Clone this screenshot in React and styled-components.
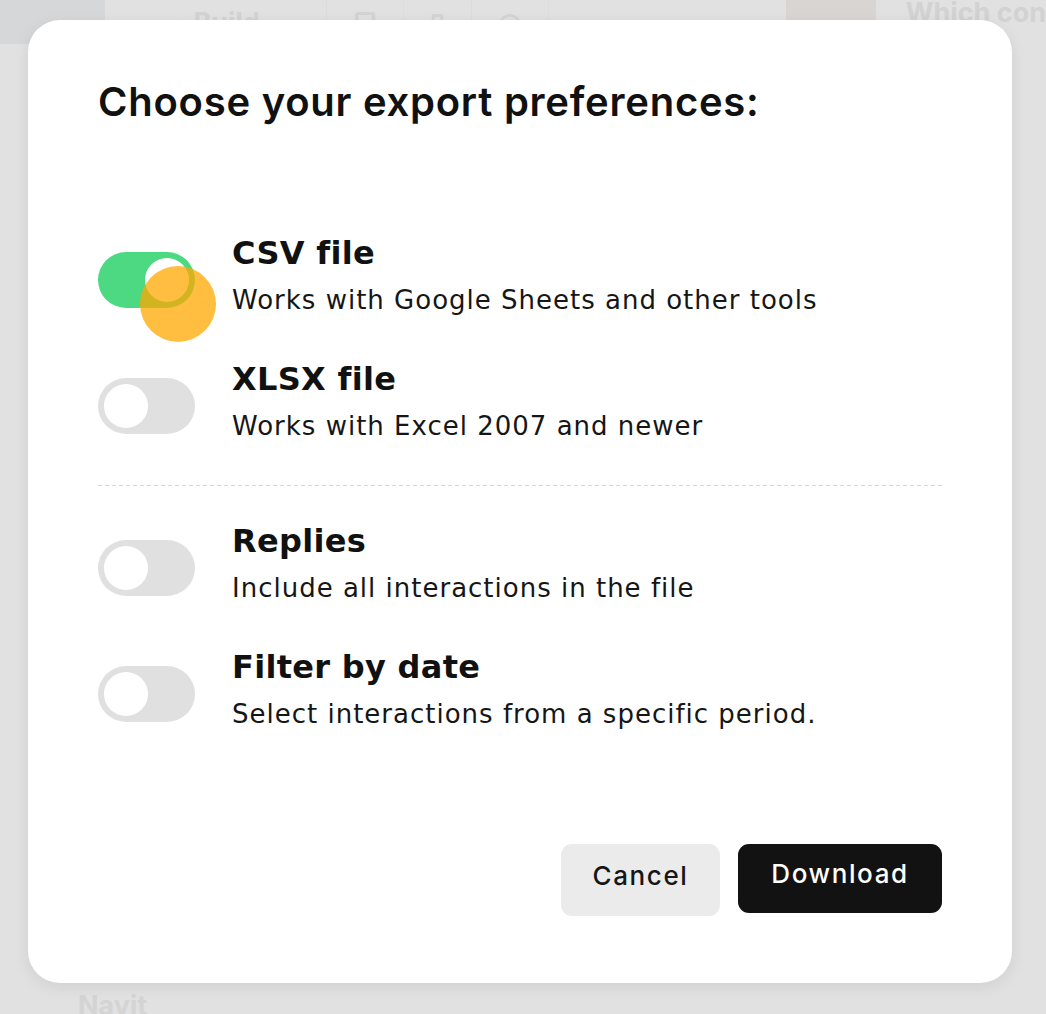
import React, { useState } from "react";
import styled, { createGlobalStyle } from "styled-components";

const GlobalStyle = createGlobalStyle`
  html, body {
    margin: 0;
    padding: 0;
    background: #e1e1e1;
    font-family: Inter, "Noto Sans", "Liberation Sans", sans-serif;
    color: #111;
  }
  * { box-sizing: border-box; }
`

const Backdrop = styled.div`
  position: relative;
  width: 1046px;
  height: 1014px;
  overflow: hidden;
  background: #e1e1e1;
`

const BgTopBar = styled.div`
  display: flex;
  align-items: center;
  height: 44px;
`

const BgLogoBlock = styled.div`
  width: 105px;
  height: 44px;
  background: #d6d7d9;
`

const BgTab = styled.div`
  display: flex;
  align-items: center;
  gap: 18px;
  height: 44px;
  padding: 0 ${(p) => p.$pad || 26}px;
  color: #d3d3d3;
  font-size: 27px;
  font-weight: 700;
  border-right: 1px solid #dcdcdc;
`

const BgSpacer = styled.div`
  flex: 1;
`

const BgThumb = styled.div`
  width: 90px;
  height: 44px;
  background: #d9d5d2;
`

const BgTitle = styled.div`
  padding-left: 30px;
  color: #d2d2d2;
  font-size: 27px;
  font-weight: 700;
  white-space: nowrap;
  margin-top: -20px;
`

const BgFooter = styled.div`
  position: absolute;
  left: 78px;
  bottom: -8px;
  color: #d4d4d4;
  font-size: 27px;
  font-weight: 700;
`

const Modal = styled.div`
  position: absolute;
  left: 28px;
  top: 20px;
  width: 984px;
  height: 963px;
  background: #fff;
  border-radius: 32px;
  box-shadow: 0 4px 16px rgba(0, 0, 0, 0.08);
  display: flex;
  flex-direction: column;
  padding: 58px 70px 67px 70px;
`

const Title = styled.h2`
  margin: 0;
  font-size: 40px;
  line-height: 48px;
  font-weight: 600;
  letter-spacing: 0.75px;
`

const Options = styled.div`
  display: flex;
  flex-direction: column;
  gap: 42px;
  margin-top: ${(p) => p.$top}px;
`

const Divider = styled.div`
  height: 1px;
  margin: 42px 0 35px;
  background-image: linear-gradient(to right, #d6d6d6 60%, transparent 60%);
  background-size: 7px 1px;
  background-repeat: repeat-x;
`

const Row = styled.div`
  display: flex;
  align-items: flex-start;
  gap: 37px;
`

const Track = styled.button`
  position: relative;
  flex: none;
  width: 97px;
  height: 56px;
  margin-top: 19px;
  padding: 0;
  border: none;
  border-radius: 28px;
  background: ${(p) => (p.$on ? "#4dd882" : "#e0e0e0")};
  cursor: pointer;
`

const Knob = styled.span`
  position: absolute;
  top: 6px;
  left: ${(p) => (p.$on ? "47px" : "6px")};
  width: 44px;
  height: 44px;
  border-radius: 50%;
  background: #fff;
`

const ClickDot = styled.span`
  position: absolute;
  left: 42px;
  top: 14px;
  width: 76px;
  height: 76px;
  border-radius: 50%;
  background: rgba(255, 168, 0, 0.75);
  pointer-events: none;
`

const Text = styled.div`
  display: flex;
  flex-direction: column;
  gap: 10px;
  font-family: "DejaVu Sans", Inter, sans-serif;
`

const Label = styled.div`
  font-size: 32px;
  line-height: 40px;
  font-weight: 700;
  letter-spacing: 0.3px;
`

const Desc = styled.div`
  font-size: 26px;
  line-height: 34px;
  font-weight: 400;
  letter-spacing: 1px;
  color: #161616;
`

const Footer = styled.div`
  margin-top: auto;
  display: flex;
  justify-content: flex-end;
  align-items: flex-start;
  gap: 18px;
`

const Button = styled.button`
  border: none;
  border-radius: 11px;
  font-family: inherit;
  font-size: 26px;
  font-weight: 500;
  letter-spacing: 1.6px;
  cursor: pointer;
  width: ${(p) => p.$w}px;
  height: ${(p) => p.$h}px;
  background: ${(p) => (p.$primary ? "#121212" : "#ebebeb")};
  color: ${(p) => (p.$primary ? "#fff" : "#161616")};
  padding: 0 0 ${(p) => (p.$primary ? "11px" : "9px")};
`

const Toggle = ({ on, onClick, clicked }) => (
  <Track $on={on} onClick={onClick}>
    <Knob $on={on} />
    {clicked && <ClickDot />}
  </Track>
)

const Option = ({ label, desc, on, clicked, onToggle }) => (
  <Row>
    <Toggle on={on} clicked={clicked} onClick={onToggle} />
    <Text>
      <Label>{label}</Label>
      <Desc>{desc}</Desc>
    </Text>
  </Row>
)

const App = () => {
  const [state, setState] = useState({ csv: true, xlsx: false, replies: false, date: false });
  const flip = (k) => () => setState((s) => ({ ...s, [k]: !s[k] }));

  return (
    <>
      <GlobalStyle />
      <Backdrop>
        <BgTopBar>
          <BgLogoBlock />
          <BgTab $pad={66}>⌁ Build</BgTab>
          <BgTab>▢</BgTab>
          <BgTab>▯</BgTab>
          <BgTab>◎</BgTab>
          <BgSpacer />
          <BgThumb />
          <BgTitle>Which con</BgTitle>
        </BgTopBar>
        <BgFooter>Navit</BgFooter>

        <Modal>
          <Title>Choose your export preferences:</Title>
          <Options $top={107}>
            <Option label="CSV file" desc="Works with Google Sheets and other tools" on={state.csv} clicked onToggle={flip("csv")} />
            <Option label="XLSX file" desc="Works with Excel 2007 and newer" on={state.xlsx} onToggle={flip("xlsx")} />
          </Options>
          <Divider />
          <Options $top={0}>
            <Option label="Replies" desc="Include all interactions in the file" on={state.replies} onToggle={flip("replies")} />
            <Option label="Filter by date" desc="Select interactions from a specific period." on={state.date} onToggle={flip("date")} />
          </Options>
          <Footer>
            <Button $w={159} $h={72}>Cancel</Button>
            <Button $w={204} $h={69} $primary>Download</Button>
          </Footer>
        </Modal>
      </Backdrop>
    </>
  );
};

export default App;
